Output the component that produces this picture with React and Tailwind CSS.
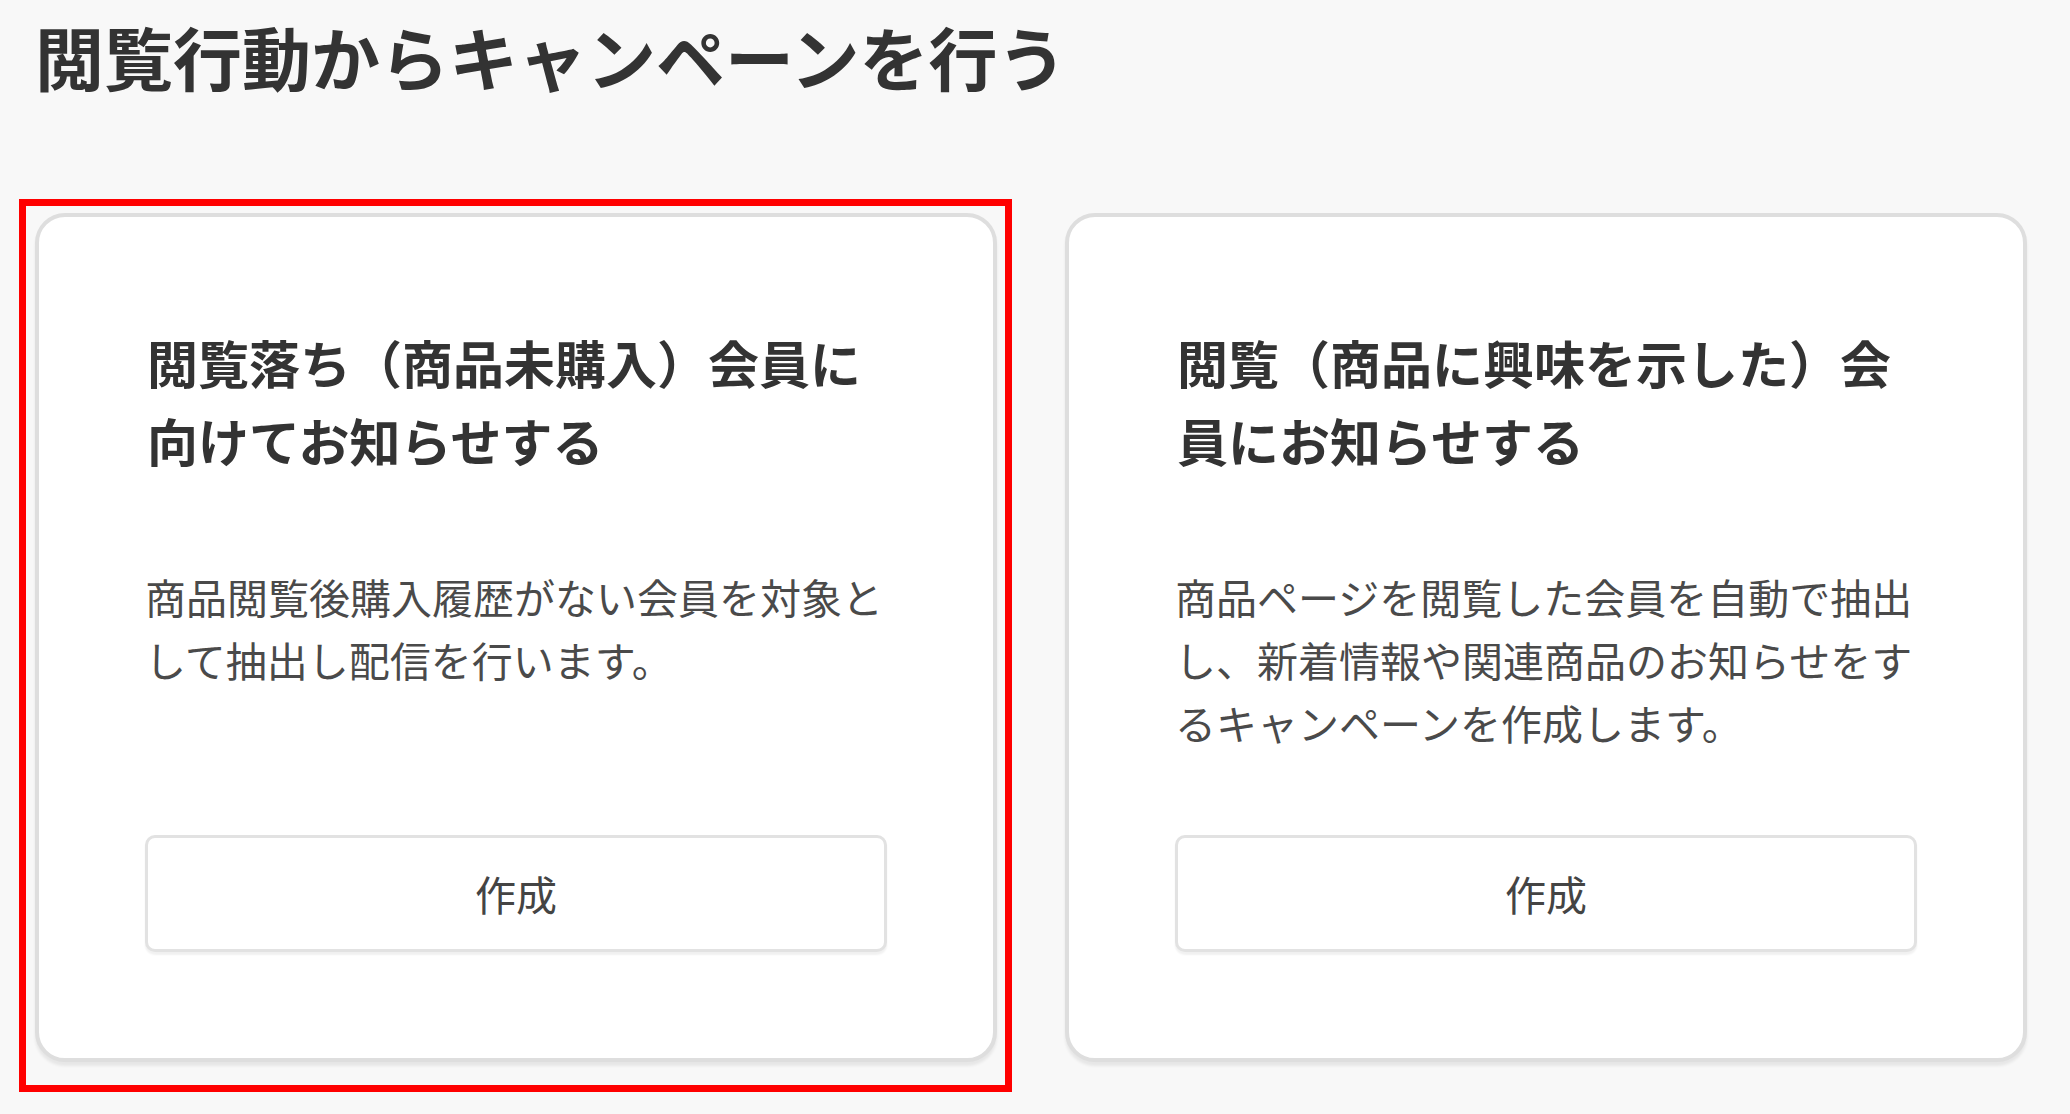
import React from "react";

const cards = [
  {
    title: ["閲覧落ち（商品未購入）会員に", "向けてお知らせする"],
    desc: ["商品閲覧後購入履歴がない会員を対象と", "して抽出し配信を行います。"],
    highlight: true,
  },
  {
    title: ["閲覧（商品に興味を示した）会", "員にお知らせする"],
    desc: [
      "商品ページを閲覧した会員を自動で抽出",
      "し、新着情報や関連商品のお知らせをす",
      "るキャンペーンを作成します。",
    ],
    highlight: false,
  },
];

function Card({ title, desc, highlight }) {
  return (
    <div className="relative">
      {highlight && (
        <div className="pointer-events-none absolute -left-[16px] -top-[14px] -right-[15px] -bottom-[30px] border-[7px] border-[#ff0000]" />
      )}
      <div className="flex h-full flex-col rounded-[30px] border-[4px] border-[#dedede] bg-white px-[106px] pt-[106px] pb-[106px] shadow-[0_4px_3px_rgba(0,0,0,0.07)]">
        <div className="pl-[2px] text-[51px] font-bold leading-[78px] text-[#333333]">
          {title.map((t) => (
            <div key={t} className="whitespace-nowrap">
              {t}
            </div>
          ))}
        </div>
        <div className="mt-[86px] flex-1 text-[41px] leading-[63px] text-[#4a4a4a]">
          {desc.map((t) => (
            <div key={t} className="whitespace-nowrap">
              {t}
            </div>
          ))}
        </div>
        <button className="mt-[81px] flex h-[117px] w-full items-center justify-center rounded-[10px] border-[3px] border-[#e2e2e2] bg-white text-[41px] text-[#444444] shadow-[0_3px_2px_rgba(0,0,0,0.06)]">
          作成
        </button>
      </div>
    </div>
  );
}

export default function App() {
  return (
    <div
      className="min-h-[1114px] w-[2070px] bg-[#f8f8f8] px-[35px] pt-[16px]"
      style={{ fontFamily: '"Noto Sans CJK JP", "Noto Sans", sans-serif' }}
    >
      <h1 className="whitespace-nowrap text-[69px] font-bold leading-[80px] text-[#333333]">
        閲覧行動からキャンペーンを行う
      </h1>
      <div className="mt-[117px] grid w-[1992px] grid-cols-2 gap-[68px]">
        {cards.map((c, i) => (
          <Card key={i} {...c} />
        ))}
      </div>
    </div>
  );
}
